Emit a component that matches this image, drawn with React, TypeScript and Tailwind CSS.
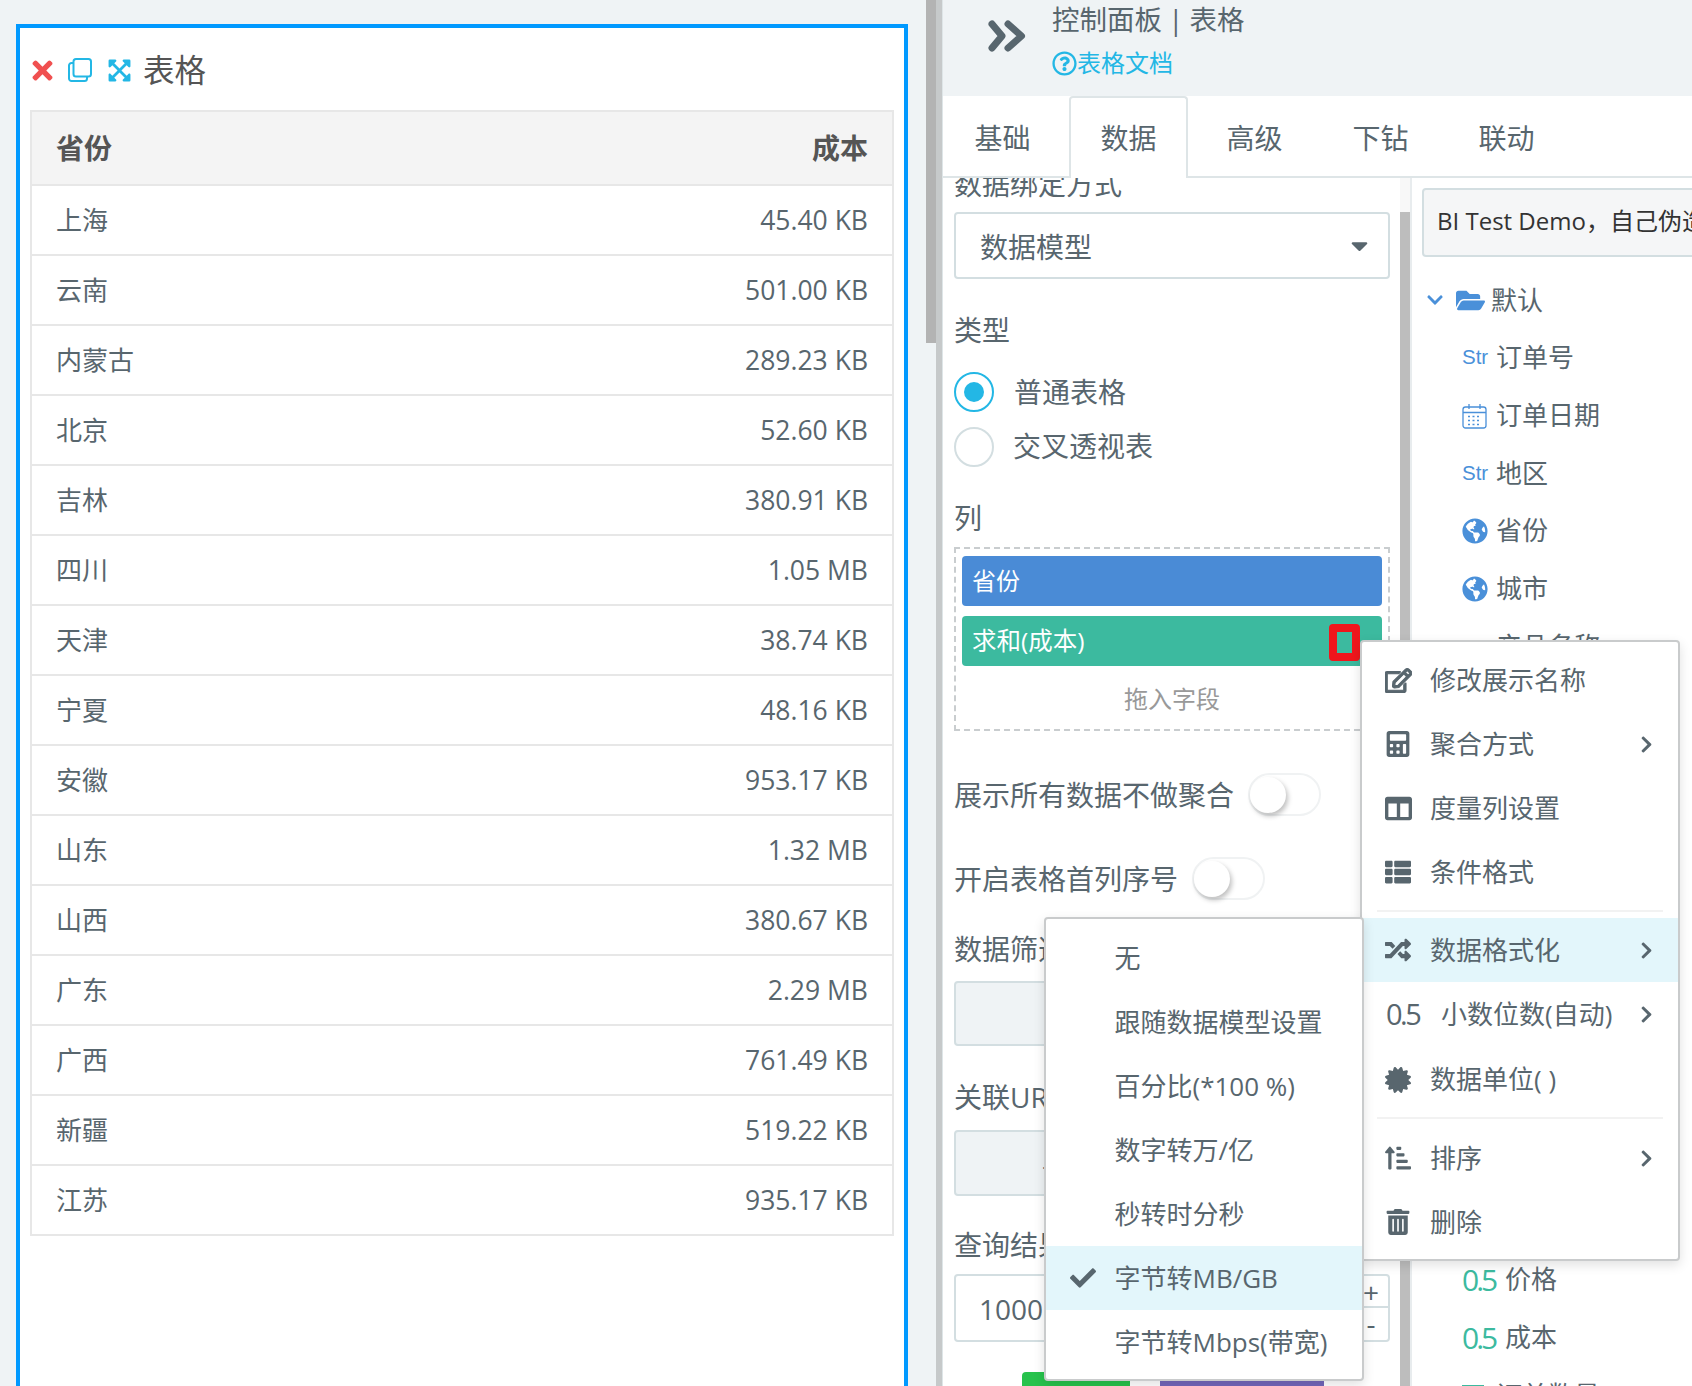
import type { ReactNode } from "react";
import {
  FaCalculator,
  FaCaretDown,
  FaCertificate,
  FaCheck,
  FaChevronDown,
  FaChevronRight,
  FaColumns,
  FaExpandArrowsAlt,
  FaFolderOpen,
  FaGlobeAmericas,
  FaRandom,
  FaRegEdit,
  FaRegQuestionCircle,
  FaSortAmountUpAlt,
  FaThList,
  FaTimes,
  FaTrashAlt,
} from "react-icons/fa";

const rows = [
  ["上海", "45.40 KB"],
  ["云南", "501.00 KB"],
  ["内蒙古", "289.23 KB"],
  ["北京", "52.60 KB"],
  ["吉林", "380.91 KB"],
  ["四川", "1.05 MB"],
  ["天津", "38.74 KB"],
  ["宁夏", "48.16 KB"],
  ["安徽", "953.17 KB"],
  ["山东", "1.32 MB"],
  ["山西", "380.67 KB"],
  ["广东", "2.29 MB"],
  ["广西", "761.49 KB"],
  ["新疆", "519.22 KB"],
  ["江苏", "935.17 KB"],
];

function CopyIcon() {
  return (
    <svg width="24" height="24" viewBox="0 0 24 24" fill="none" stroke="#23b7e5" strokeWidth="2">
      <rect x="5.5" y="1" width="17.5" height="17.5" rx="2.5" />
      <path d="M5.5 5H3.5A2.5 2.5 0 0 0 1 7.5V20.5A2.5 2.5 0 0 0 3.5 23H16.5A2.5 2.5 0 0 0 19 20.5V18.5" />
    </svg>
  );
}

function CalendarIcon() {
  return (
    <svg width="25" height="26" viewBox="0 0 25 26" fill="none" stroke="#4a90d9" strokeWidth="1.3">
      <rect x="1" y="4" width="23" height="21" rx="2.5" />
      <path d="M1 9.5H24M7 1V6M18 1V6" />
      <path d="M6 13.5H19M6 17.5H19M6 21.5H19" strokeDasharray="2 2.5" />
    </svg>
  );
}

function DoubleChevron() {
  return (
    <svg width="38" height="32" viewBox="0 0 38 32" fill="none" stroke="#58666e" strokeWidth="7" strokeLinecap="round" strokeLinejoin="round" className="mt-[20px] shrink-0">
      <path d="M4 4L14 16L4 28M20 4L33.5 16L20 28" />
    </svg>
  );
}

function Toggle() {
  return (
    <div className="w-[73px] h-[43px] rounded-full border-2 border-[#f0f2f3] bg-white shrink-0 relative">
      <div className="absolute left-0 top-[2px] w-[36px] h-[36px] rounded-full bg-white shadow-[2px_3px_5px_rgba(0,0,0,0.25)]" />
    </div>
  );
}

function Label({ children }: { children: ReactNode }) {
  return <div className="h-[40px] leading-[40px] text-[28px] whitespace-nowrap">{children}</div>;
}

function Field({ children, label, slot = "w-[34px]" }: { children?: ReactNode; label?: string; slot?: string }) {
  return (
    <div className="flex items-center h-[57.7px] pl-[50px] whitespace-nowrap">
      <span className={`shrink-0 flex items-center ${slot}`}>{children}</span>
      <span className="text-[26px]">{label}</span>
    </div>
  );
}

function Str() {
  return <span className="font-['Liberation_Sans',sans-serif] text-[20.5px] text-[#4a90d9]">Str</span>;
}

function Num() {
  return <span className="text-[30px] tracking-[-3px] text-[#3cba9f]">0.5</span>;
}

function MenuItem({
  icon,
  label,
  arrow,
  active,
  iconWidth = "w-[45px]",
  height = "h-[64px]",
}: {
  icon: ReactNode;
  label: string;
  arrow?: boolean;
  active?: boolean;
  iconWidth?: string;
  height?: string;
}) {
  return (
    <div className={`flex items-center pl-[23px] pr-[22px] text-[26px] whitespace-nowrap ${height} ${active ? "bg-[#e3f6fb]" : ""}`}>
      <span className={`flex items-center shrink-0 ${iconWidth}`}>{icon}</span>
      <span>{label}</span>
      {arrow && <FaChevronRight className="ml-auto text-[19px] text-[#58666e]" />}
    </div>
  );
}

function SubItem({ label, checked }: { label: string; checked?: boolean }) {
  return (
    <div className={`flex items-center h-[64px] text-[26px] whitespace-nowrap ${checked ? "bg-[#e3f6fb]" : ""}`}>
      <span className="w-[68.5px] pl-[24px] shrink-0">{checked && <FaCheck className="text-[26px]" />}</span>
      <span>{label}</span>
    </div>
  );
}

export default function App() {
  return (
    <div className="relative flex w-[1692px] h-[1386px] overflow-hidden bg-[#eff3f5] text-[#58666e] font-['Open_Sans','Noto_Sans_CJK_SC',sans-serif]">
      {/* canvas */}
      <div className="w-[926px] shrink-0 pl-4 pt-6">
        <div className="w-[892px] h-[1400px] border-4 border-[#0099ff] bg-white pl-[10px]">
          <div className="flex items-center h-[40px] mt-[22px] pl-[2px]">
            <FaTimes className="-ml-[4.5px] text-[29px] text-[#f05050]" />
            <span className="ml-[11.5px]">
              <CopyIcon />
            </span>
            <FaExpandArrowsAlt className="ml-[14.5px] text-[25px] text-[#23b7e5]" />
            <span className="ml-[11.5px] text-[31.5px] text-[#555]">表格</span>
          </div>
          <div className="mt-[20px] w-[864px] border-x-2 border-t-2 border-[#e7e7e7]">
            <div className="flex items-center justify-between h-[74px] px-[24px] border-b-2 border-[#e7e7e7] bg-[#f4f4f4] text-[28px] font-bold text-[#555]">
              <span>省份</span>
              <span>成本</span>
            </div>
            {rows.map(([name, value]) => (
              <div key={name} className="flex items-center justify-between h-[70px] pt-[2px] px-[24px] border-b-2 border-[#e7e7e7] text-[26px]">
                <span className="-mt-[2px]">{name}</span>
                <span className="text-[26.5px]">{value}</span>
              </div>
            ))}
          </div>
        </div>
      </div>
      <div className="w-[10px] h-[343px] shrink-0 bg-[#b3b3b3]" />

      {/* settings panel */}
      <div className="w-[6px] shrink-0 bg-[#c6c9ca]" />
      <div className="flex-1 min-w-0 flex flex-col border-l border-[#dee5e7]">
        <div className="flex h-[96px] shrink-0 pl-[45px]">
          <DoubleChevron />
          <div className="ml-[26px]">
            <div className="h-[40px] leading-[40px] text-[27.5px] [word-spacing:-1px]">控制面板 | 表格</div>
            <div className="flex items-center h-[46px] text-[24px] text-[#23b7e5]">
              <FaRegQuestionCircle className="text-[25px]" />
              表格文档
            </div>
          </div>
        </div>

        <div className="flex items-end h-[82px] shrink-0 gap-[7px] bg-white border-b-2 border-[#dee5e7] z-10">
          {["基础", "数据", "高级", "下钻", "联动"].map((tab) => (
            <div
              key={tab}
              className={`w-[119px] h-[82px] -mb-[2px] text-center text-[28px] rounded-t ${
                tab === "数据" ? "leading-[80px] border-2 border-b-0 border-[#dee5e7] bg-white" : "leading-[84px]"
              }`}
            >
              {tab}
            </div>
          ))}
        </div>

        <div className="flex-1 flex min-h-0 bg-white">
          {/* form column */}
          <div className="w-[457px] shrink-0 overflow-hidden pl-[11px] pr-[10px]">
            <div className="-mt-[14px]">
              <Label>数据绑定方式</Label>
            </div>
            <div className="flex items-center justify-between h-[67px] mt-[8px] pl-[24px] pr-[15px] border-2 border-[#d3dee1] rounded text-[28px] leading-[67px]">
              <span className="mt-[3px]">数据模型</span>
              <FaCaretDown className="text-[27px]" />
            </div>

            <div className="mt-[31px]">
              <Label>类型</Label>
            </div>
            <div className="flex items-center mt-[22px] h-[40px]">
              <div className="flex items-center justify-center w-[40px] h-[40px] rounded-full border-2 border-[#23b7e5]">
                <div className="w-[20px] h-[20px] rounded-full bg-[#23b7e5]" />
              </div>
              <span className="ml-[20px] text-[28px]">普通表格</span>
            </div>
            <div className="flex items-center mt-[15px] h-[40px]">
              <div className="w-[40px] h-[40px] rounded-full border-2 border-[#d3dee1]" />
              <span className="ml-[19px] text-[28px] -mt-[3px]">交叉透视表</span>
            </div>

            <div className="mt-[31px]">
              <Label>列</Label>
            </div>
            <div className="mt-[9px] h-[184px] border-2 border-dashed border-[#c9cdcf] px-[6px] pt-[7px]">
              <div className="flex items-center h-[50px] pl-[10px] rounded bg-[#4a8bd6] text-[24px] text-white">省份</div>
              <div className="relative flex items-center h-[50px] mt-[10px] pl-[10px] rounded bg-[#3cba9f] text-[24.5px] text-white">
                求和(成本)
                <div className="absolute left-[367px] top-[8px] w-[31px] h-[37px] rounded border-[8px] border-[#f0161c]" />
              </div>
              <div className="mt-[15px] text-center text-[24px] text-[#999]">拖入字段</div>
            </div>

            <div className="flex items-center h-[43px] mt-[42px]">
              <span className="text-[28px] whitespace-nowrap">展示所有数据不做聚合</span>
              <span className="ml-[14px]">
                <Toggle />
              </span>
            </div>
            <div className="flex items-center h-[43px] mt-[41px]">
              <span className="text-[28px] whitespace-nowrap">开启表格首列序号</span>
              <span className="ml-[14px]">
                <Toggle />
              </span>
            </div>

            <div className="mt-[29px]">
              <Label>数据筛选</Label>
            </div>
            <div className="h-[65px] mt-[12px] border-2 border-[#d3dee1] rounded bg-[#eff3f5]" />
            <div className="mt-[31px]">
              <Label>关联URL</Label>
            </div>
            <div className="h-[66px] mt-[13px] pl-[86px] leading-[62px] border-2 border-[#d3dee1] rounded bg-[#eff3f5]">.</div>
            <div className="mt-[29px]">
              <Label>查询结果</Label>
            </div>
            <div className="flex h-[68px] mt-[9px] border-2 border-[#d3dee1] rounded bg-white">
              <span className="flex-1 pl-[23px] leading-[66px] text-[28px]">1000</span>
              <div className="w-[36px] flex flex-col border-l-2 border-[#d3dee1] text-center text-[28px]">
                <span className="h-[32px] leading-[32px] border-b-2 border-[#d3dee1]">+</span>
                <span className="leading-[30px]">-</span>
              </div>
            </div>
            <div className="flex gap-[30px] mt-[30px] ml-[68px]">
              <div className="w-[108px] h-[50px] rounded bg-[#27c24c]" />
              <div className="w-[164px] h-[50px] rounded bg-[#7266ba]" />
            </div>
          </div>

          {/* form scrollbar */}
          <div className="w-[10px] shrink-0 flex flex-col">
            <div className="h-[34px] bg-[#f8f8f8]" />
            <div className="flex-1 bg-[#bdbdbd]" />
          </div>

          {/* field tree */}
          <div className="flex-1 min-w-0 overflow-hidden border-l-2 border-[#e8ecee] pt-[10px] pl-[10px]">
            <div className="w-[400px] h-[69px] leading-[61px] pl-[13px] border-2 border-[#d3dee1] rounded bg-[#f5f6f7] text-[24px] text-[#333] whitespace-nowrap">
              BI Test Demo，自己伪造的数据
            </div>
            <div className="flex items-center h-[58px] mt-[14px] pl-[4px] whitespace-nowrap">
              <FaChevronDown className="text-[18px] text-[#4a90d9]" />
              <FaFolderOpen className="ml-[12px] text-[29px] text-[#4a90d9]" />
              <span className="ml-[6px] text-[26px]">默认</span>
            </div>
            <div className="-ml-[10px]">
              <Field label="订单号">
                <Str />
              </Field>
              <Field label="订单日期">
                <CalendarIcon />
              </Field>
              <Field label="地区">
                <Str />
              </Field>
              <Field label="省份">
                <FaGlobeAmericas className="text-[26px] text-[#4a90d9]" />
              </Field>
              <Field label="城市">
                <FaGlobeAmericas className="text-[26px] text-[#4a90d9]" />
              </Field>
              <Field label="产品名称" />
              <div className="h-[576px]" />
              <Field label="价格" slot="w-[43px]">
                <Num />
              </Field>
              <Field label="成本" slot="w-[43px]">
                <Num />
              </Field>
              <Field label="订单数量">
                <div className="w-[22px] h-[20px] border-t-2 border-[#3cba9f]" />
              </Field>
            </div>
          </div>
        </div>
      </div>

      {/* field context menu */}
      <div className="absolute left-[1360px] top-[640px] w-[320px] pt-[6px] pb-[5px] bg-white border-2 border-[#c9cbcc] rounded shadow-[0_4px_12px_rgba(0,0,0,0.12)]">
        <MenuItem icon={<FaRegEdit className="text-[27px] stroke-current stroke-[24]" />} label="修改展示名称" />
        <MenuItem icon={<FaCalculator className="text-[26px]" />} label="聚合方式" arrow />
        <MenuItem icon={<FaColumns className="text-[27px]" />} label="度量列设置" />
        <MenuItem icon={<FaThList className="text-[26px]" />} label="条件格式" />
        <div className="h-[2px] mt-[6px] mb-[6px] mx-[15px] bg-[#f2f2f2]" />
        <MenuItem icon={<FaRandom className="text-[26px]" />} label="数据格式化" arrow active />
        <MenuItem
          icon={<span className="pl-[1px] text-[29px] tracking-[-2.5px]">0.5</span>}
          label="小数位数(自动)"
          arrow
          iconWidth="w-[56px]"
        />
        <MenuItem icon={<FaCertificate className="text-[26px]" />} label="数据单位( )" height="h-[67px]" />
        <div className="h-[2px] mt-[4px] mb-[7px] mx-[15px] bg-[#f2f2f2]" />
        <MenuItem icon={<FaSortAmountUpAlt className="text-[26px]" />} label="排序" arrow />
        <MenuItem icon={<FaTrashAlt className="text-[26px]" />} label="删除" />
      </div>

      {/* format submenu */}
      <div className="absolute left-[1044px] top-[917px] w-[320px] pt-[7px] pb-[5px] bg-white border-2 border-[#c9cbcc] rounded shadow-[0_4px_12px_rgba(0,0,0,0.12)]">
        <SubItem label="无" />
        <SubItem label="跟随数据模型设置" />
        <SubItem label="百分比(*100 %)" />
        <SubItem label="数字转万/亿" />
        <SubItem label="秒转时分秒" />
        <SubItem label="字节转MB/GB" checked />
        <SubItem label="字节转Mbps(带宽)" />
      </div>
    </div>
  );
}
